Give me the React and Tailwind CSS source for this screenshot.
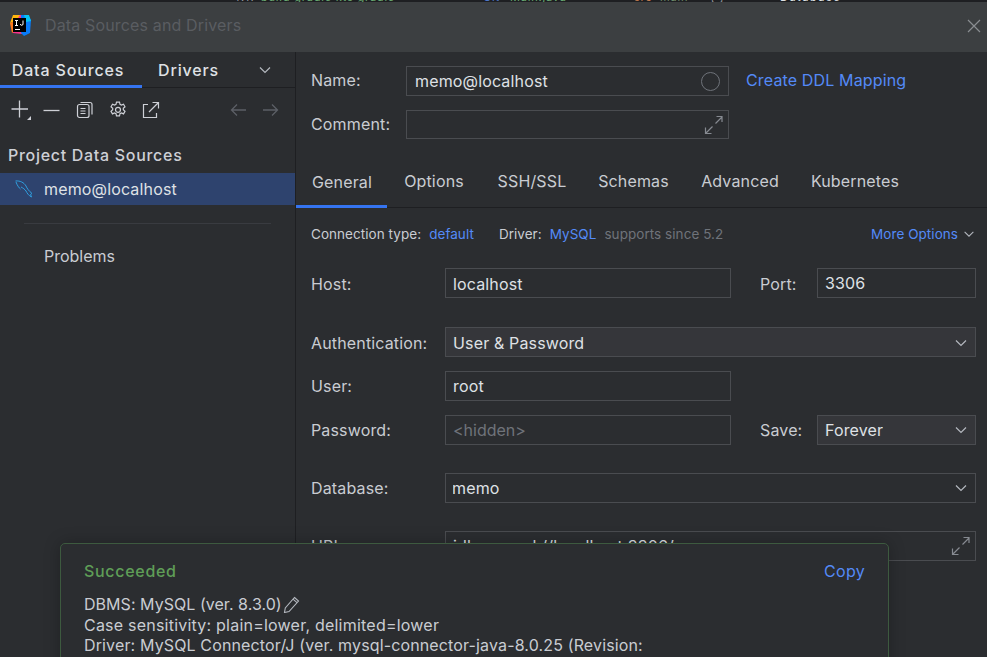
import React from 'react';

const labelCls = 'text-[#c9ccd2]';

const IconLogo = () => (
  <svg width="22" height="22" viewBox="0 0 22 22">
    <path d="M4 1h8l3 3-2 16-9-1z" fill="#fc318c" />
    <path d="M4 1h7L7 7 1 9z" fill="#fdb60d" />
    <path d="M1 9l5-2 1 9-4 3z" fill="#fe7a1c" />
    <path d="M12 1h7l3 5-1 13-6 3-3-3z" fill="#087cfa" />
    <path d="M15 1h5l2 6-5 1z" fill="#07c3f2" />
    <rect x="4" y="4" width="13" height="14" fill="#000" />
    <rect x="6" y="15" width="5" height="1" fill="#fff" />
    <path d="M6 6.500h3M7.500 6.500v5M6 11.500h3M14 6.500v3.500a1.300 1.300 0 0 1-2.600 0" stroke="#fff" strokeWidth="1" fill="none" />
  </svg>
);

const Chevron = ({ size = 16, color = '#b4b8bf' }) => (
  <svg width={size} height={size} viewBox="0 0 16 16" fill="none" stroke={color} strokeWidth="1.2">
    <path d="M3 5.500l5 5 5-5" />
  </svg>
);

const Expand = () => (
  <svg className="-mr-[2px]" width="20" height="20" viewBox="0 0 20 20" fill="none" stroke="#868a91" strokeWidth="1.2">
    <path d="M11.500 8.500L18 2M12.500 1.500h5.500v5.500M8.500 11.500L2 18M1.500 12.500v6h6" />
  </svg>
);

const Field = ({ className, children, right }) => (
  <div className={`flex items-center justify-between border border-[#4a4c50] pl-[7px] pr-[6px] ${className}`}>
    <span className="truncate">{children}</span>
    {right}
  </div>
);

const Dolphin = () => (
  <svg width="20" height="20" viewBox="0 0 20 20" fill="none" stroke="#2f9fe0" strokeWidth="1">
    <path d="M1.500 2C6 1.500 10 3.500 12 7c1 2.500 3 5 6 7.500M2 3c1 3 3 6 4.500 7M7 8c2 1 4 2.500 5 4 1 2 2.500 4.500 5.500 6M18 14.500l-1.500 1 1 2.500" />
  </svg>
);

const Toolbar = () => (
  <div className="flex items-center h-[44px] pl-[10px] pr-[16px] text-[#ced0d6]">
    <svg width="22" height="24" viewBox="0 0 22 24" fill="none" stroke="currentColor" strokeWidth="1.300">
      <path d="M9.500 2.500v17M1.500 11h16.500" />
      <path d="M21 18v4h-4z" fill="currentColor" stroke="none" />
    </svg>
    <svg className="ml-[11px]" width="17" height="17" viewBox="0 0 17 17" fill="none" stroke="currentColor" strokeWidth="1.300">
      <path d="M0.500 8.500h16" />
    </svg>
    <svg className="ml-[16px]" width="18" height="18" viewBox="0 0 18 18" fill="none" stroke="currentColor" strokeWidth="1.200">
      <rect x="1.500" y="3.500" width="11.500" height="13" rx="2" />
      <path d="M4.500 1.500h9.500a2 2 0 0 1 2 2v10" />
      <path d="M4.500 7.500h5M4.500 10h5M4.500 12.500h5" />
    </svg>
    <svg className="ml-[15px]" width="18" height="18" viewBox="0 0 18 18" fill="none" stroke="currentColor" strokeWidth="1.200">
      <path d="M7.500 1.200h3l.5 2.200 1.400.7 2.100-.9 1.500 2.600-1.700 1.500v1.500l1.700 1.500-1.500 2.600-2.100-.9-1.400.7-.5 2.200h-3l-.5-2.200-1.400-.7-2.100.9-1.500-2.600 1.700-1.500V7.300L2 5.800l1.500-2.600 2.100.9L7 3.400z" />
      <circle cx="9" cy="8.800" r="2.500" />
    </svg>
    <svg className="ml-[15px]" width="18" height="18" viewBox="0 0 18 18" fill="none" stroke="currentColor" strokeWidth="1.200">
      <path d="M6 3.500H1.500v13h13V12M7 11L16.500 1.500M10.500 1.500h6v6" />
    </svg>
    <div className="flex-1" />
    <svg width="17" height="14" viewBox="0 0 17 14" fill="none" stroke="#5c5f66" strokeWidth="1.300">
      <path d="M16 7H1.500M7 1.500L1.500 7 7 12.500" />
    </svg>
    <svg className="ml-[15px]" width="17" height="14" viewBox="0 0 17 14" fill="none" stroke="#5c5f66" strokeWidth="1.300">
      <path d="M1 7h14.500M10 1.500L15.500 7 10 12.500" />
    </svg>
  </div>
);

const Sidebar = () => (
  <div className="w-[296px] shrink-0 border-r border-[#1e1f22] flex flex-col tracking-normal">
    <div className="relative flex items-center h-[36px] border-b border-[#1e1f22] pr-[22px] text-[#dfe1e5] font-medium tracking-[0.85px]">
      <div className="w-[142px] h-full flex items-center justify-center border-b-[3px] border-[#3574f0] -mb-px pt-[2px] pr-[6px]">Data Sources</div>
      <div className="ml-[16px] pt-[1px]">Drivers</div>
      <div className="flex-1" />
      <Chevron />
    </div>
    <Toolbar />
    <div className="mt-[12px] pl-[8px] h-[22px] flex items-center text-[#ced0d6] font-medium tracking-[0.7px]">Project Data Sources</div>
    <div className="mt-[7px] h-[32px] bg-[#2e436e] flex items-center pl-[14px] pr-[6px] text-[#dfe1e5]">
      <Dolphin />
      <span className="ml-[10px] tracking-[0.15px]">memo@localhost</span>
    </div>
    <div className="mt-[18px] mx-[24px] h-px bg-[#393b40]" />
    <div className="mt-[21px] pl-[44px] text-[#c9ccd2]">Problems</div>
  </div>
);

const tabs = [
  { name: 'Options', cls: 'w-[94px]' },
  { name: 'SSH/SSL', cls: 'w-[102px]' },
  { name: 'Schemas', cls: 'w-[101px]' },
  { name: 'Advanced', cls: 'w-[112px]' },
  { name: 'Kubernetes', cls: 'w-[118px]' },
];

const Tabs = () => (
  <div className="flex items-stretch h-[43px] mt-[26px] border-b border-[#1e1f22] text-[#c9ccd2]">
    <div className="w-[91px] flex items-center justify-center pb-[7px] pl-[1px] border-b-[3px] border-[#3574f0] -mb-px">General</div>
    {tabs.map((t) => (
      <div key={t.name} className={`${t.cls} flex items-center justify-center pb-[10px]`}>{t.name}</div>
    ))}
  </div>
);

const Form = () => (
  <div className="flex-1 min-w-0 flex flex-col">
    <div className="flex items-center mt-[14px] pl-[15px]">
      <span className={`w-[95px] pb-[2px] ${labelCls}`}>Name:</span>
      <Field className="w-[323px] h-[30px]" right={<span className="w-[19px] h-[19px] rounded-full border border-[#6f737a] mr-[2px]" />}>
        <span className="pl-[1px]">memo@localhost</span>
      </Field>
      <span className="ml-[17px] pb-[2px] text-[#548af7]">Create DDL Mapping</span>
    </div>
    <div className="flex items-center mt-[14px] pl-[15px]">
      <span className={`w-[95px] pb-[2px] ${labelCls}`}>Comment:</span>
      <Field className="w-[323px] h-[29px]" right={<Expand />} />
    </div>
    <Tabs />
    <div className="flex items-center h-[20px] mt-[16px] pl-[15px] pr-[11px] text-[13.5px] tracking-[0.05px] text-[#c9ccd2]">
      <span>Connection type:</span>
      <span className="ml-[8px] text-[#548af7]">default</span>
      <span className="ml-[25px]">Driver:</span>
      <span className="ml-[8px] text-[#548af7]">MySQL</span>
      <span className="ml-[8px] text-[#6f737a]">supports since 5.2</span>
      <div className="flex-1" />
      <span className="text-[#548af7]">More Options</span>
      <span className="ml-[4px]"><Chevron size={14} /></span>
    </div>
    <div className="flex items-center mt-[24px] pl-[15px] pr-[11px]">
      <span className={`w-[134px] pt-[2px] ${labelCls}`}>Host:</span>
      <Field className="w-[286px] h-[30px] pt-[1px]">localhost</Field>
      <span className={`ml-[29px] w-[57px] pt-[2px] ${labelCls}`}>Port:</span>
      <Field className="flex-1 h-[30px]">3306</Field>
    </div>
    <div className="flex items-center mt-[29px] pl-[15px] pr-[11px]">
      <span className={`w-[134px] pt-[2px] ${labelCls}`}>Authentication:</span>
      <Field className="flex-1 h-[30px] pt-[1px] bg-[#35363a]" right={<Chevron />}>User &amp; Password</Field>
    </div>
    <div className="flex items-center mt-[14px] pl-[15px]">
      <span className={`w-[134px] ${labelCls}`}>User:</span>
      <Field className="w-[286px] h-[30px]">root</Field>
    </div>
    <div className="flex items-center mt-[14px] pl-[15px] pr-[11px]">
      <span className={`w-[134px] ${labelCls}`}>Password:</span>
      <Field className="w-[286px] h-[30px]"><span className="text-[#6f737a] tracking-normal">&lt;hidden&gt;</span></Field>
      <span className={`ml-[29px] w-[57px] ${labelCls}`}>Save:</span>
      <Field className="flex-1 h-[30px] bg-[#35363a]" right={<Chevron />}>Forever</Field>
    </div>
    <div className="flex items-center mt-[28px] pl-[15px] pr-[11px]">
      <span className={`w-[134px] ${labelCls}`}>Database:</span>
      <Field className="flex-1 h-[30px]" right={<Chevron />}>
        <span className="-ml-[1px]">memo</span>
      </Field>
    </div>
    <div className="flex items-center mt-[28px] pl-[15px] pr-[11px]">
      <span className={`w-[134px] ${labelCls}`}>URL:</span>
      <Field className="flex-1 h-[30px]" right={<Expand />}>jdbc:mysql://localhost:3306/memo</Field>
    </div>
  </div>
);

// clipped bottom edge of the editor window behind the dialog
const BehindStrip = () => (
  <div className="h-[2px] bg-[#1e1f22] overflow-hidden flex text-[11px] leading-[12px] whitespace-nowrap tracking-[0.8px]">
    <span className="-mt-[9px] ml-[233px] w-[28px] text-[#9a9da3]">4:17</span>
    <span className="-mt-[9px] w-[188px] text-[#6aab73]">build gradle kts  gradle</span>
    <span className="-mt-[9px] w-[34px] text-[#9a9da3]">&gt;</span>
    <span className="-mt-[9px] w-[27px] text-[#4d78cc]">Git</span>
    <span className="-mt-[9px] w-[124px] text-[#6aab73]">Main.java</span>
    <span className="-mt-[9px] w-[26px] text-[#c77d4f]">src</span>
    <span className="-mt-[9px] w-[50px] text-[#6f8a6a]">main</span>
    <span className="-mt-[9px] w-[70px] text-[#9a9da3]">{'{ }'}</span>
    <span className="-mt-[9px] text-[#dfe1e5] tracking-[1.500px]">Database</span>
  </div>
);

export default function App() {
  return (
    <div className="relative w-[987px] h-[657px] overflow-hidden bg-[#2b2d30] text-[#dfe1e5] text-[16px] leading-[22px] tracking-[0.15px] font-['Inter',sans-serif]">
      <BehindStrip />
      <div className="h-[50px] bg-[#3c3f41] flex items-center pl-[9px] pr-[5px] pb-[4px]">
        <IconLogo />
        <span className="ml-[14px] text-[#5a5d61] tracking-[0.15px]">Data Sources and Drivers</span>
        <div className="flex-1" />
        <svg className="mt-[2px]" width="16" height="16" viewBox="0 0 16 16" fill="none" stroke="#8a8d91" strokeWidth="1.200">
          <path d="M2 2l12 12M14 2L2 14" />
        </svg>
      </div>
      <div className="flex h-[605px]">
        <Sidebar />
        <Form />
      </div>
      <div className="absolute left-[60px] top-[543px] w-[829px] h-[130px] rounded-[5px] border border-[#3d5a3f] bg-[#2b2d30] pl-[23px] pr-[23px] pt-[16px] shadow-[0_0_16px_rgba(0,0,0,0.25)]">
        <div className="flex items-center justify-between h-[22px]">
          <span className="text-[#5f9e57] font-medium tracking-[0.7px]">Succeeded</span>
          <span className="text-[#548af7] tracking-[0.3px]">Copy</span>
        </div>
        <div className="mt-[12px] text-[#c9ccd2] leading-[20.5px]">
          <div className="flex items-center tracking-[0.04px]">
            DBMS: MySQL (ver. 8.3.0)
            <svg className="ml-[1px]" width="17" height="17" viewBox="0 0 17 17" fill="none" stroke="#b4b8bf" strokeWidth="1.100">
              <path d="M11.500 1.500l4 3.500-9.500 10.500-4.500 1 .8-4.500zM10 3.200l4 3.500" />
            </svg>
          </div>
          <div className="tracking-[0.22px]">Case sensitivity: plain=lower, delimited=lower</div>
          <div className="tracking-[0.14px]">Driver: MySQL Connector/J (ver. mysql-connector-java-8.0.25 (Revision:</div>
        </div>
      </div>
    </div>
  );
}
